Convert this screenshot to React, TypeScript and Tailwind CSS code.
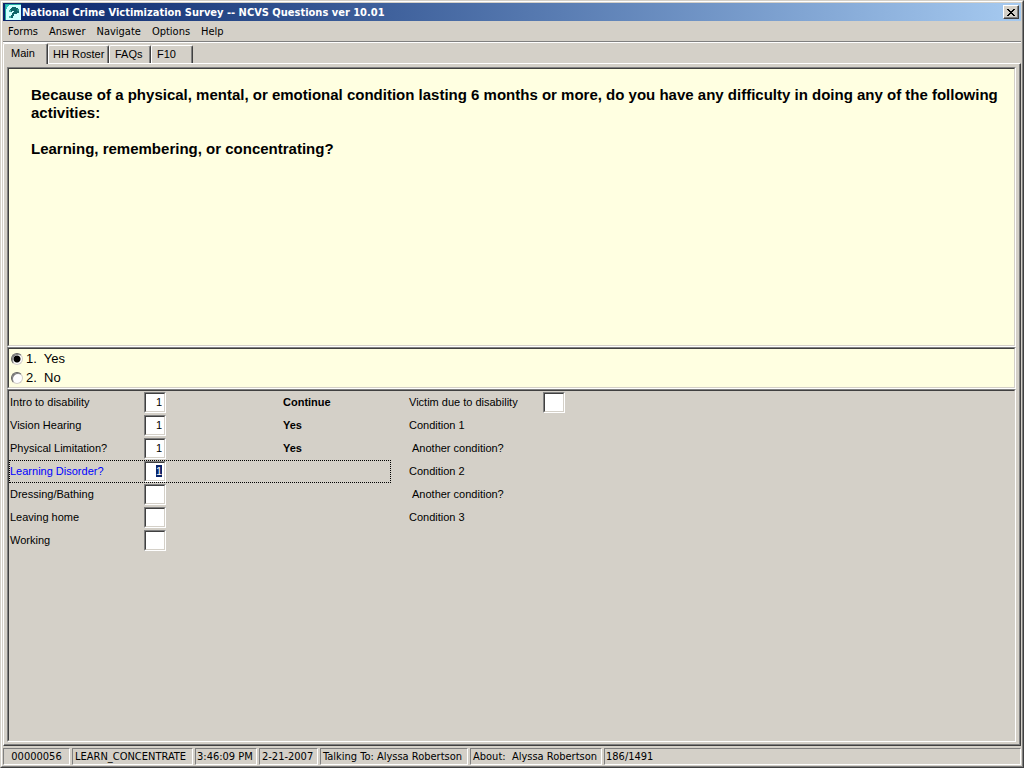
import { useEffect, useRef, useState } from "react";
import clsx from "clsx";

const MENU = ["Forms", "Answer", "Navigate", "Options", "Help"];

const TABS = [
  { name: "Main", width: "w-[45px]" },
  { name: "HH Roster", width: "w-[61px] pl-1" },
  { name: "FAQs", width: "w-[42px] pl-[5px]" },
  { name: "F10", width: "w-[42px] pl-[5px]" },
];

const CHOICES = [
  { value: "1", label: "Yes" },
  { value: "2", label: "No" },
];

type Field = {
  label: string;
  value?: string;
  answer?: string;
  noInput?: boolean;
  indent?: boolean;
};

const LEFT_FIELDS: Field[] = [
  { label: "Intro to disability", value: "1", answer: "Continue" },
  { label: "Vision Hearing", value: "1", answer: "Yes" },
  { label: "Physical Limitation?", value: "1", answer: "Yes" },
  { label: "Learning Disorder?", value: "1" },
  { label: "Dressing/Bathing" },
  { label: "Leaving home" },
  { label: "Working" },
];

const RIGHT_FIELDS: Field[] = [
  { label: "Victim due to disability" },
  { label: "Condition 1", noInput: true },
  { label: "Another condition?", noInput: true, indent: true },
  { label: "Condition 2", noInput: true },
  { label: "Another condition?", noInput: true, indent: true },
  { label: "Condition 3", noInput: true },
];

const STATUS = [
  { text: "00000056", width: "w-[67px] justify-center" },
  { text: "LEARN_CONCENTRATE", width: "w-[121px] pl-0.5" },
  { text: "3:46:09 PM", width: "w-[62px] pl-px" },
  { text: "2-21-2007", width: "w-[59px] pl-0.5" },
  { text: "Talking To: Alyssa Robertson", width: "w-[148px] pl-0.5" },
  { text: "About:  Alyssa Robertson", width: "w-[132px] pl-0.5" },
  { text: "186/1491", width: "flex-1 pl-px" },
];

// two-tone sunken edge: outer border plus an inner one
const OUTER = "border border-t-[#808080] border-l-[#808080] border-b-white border-r-white";
const INNER = "border border-t-[#404040] border-l-[#404040] border-b-[#d4d0c8] border-r-[#d4d0c8]";

function Sunken({
  children,
  className,
  innerClassName,
}: {
  children: React.ReactNode;
  className?: string;
  innerClassName?: string;
}) {
  return (
    <div className={clsx("flex flex-col", OUTER, className)}>
      <div className={clsx("flex-1", INNER, innerClassName)}>{children}</div>
    </div>
  );
}

function TitleBar() {
  return (
    <header className="flex h-[18px] items-center bg-linear-to-r from-[#0a246a] to-[#a6caf0] pl-0.5 pr-0.5">
      <svg viewBox="0 0 16 16" className="h-4 w-4 shrink-0" shapeRendering="crispEdges">
        <rect width="16" height="16" fill="#d0ffff" />
        <path d="M0 0H16V1H1V16H0Z" fill="#20a8a0" />
        <path d="M1 1H4V2H3V3H2V5H1Z" fill="#30c8c0" />
        <path d="M7 3H11V4H13V5H14V9H12V10H10V8H9V7H7V8H4V6H5V5H6V4H7Z" fill="#0c6468" />
        <path d="M4 6H6V8H4Z" fill="#48b0a8" />
        <path d="M8 8H10V10H9V12H8V14H5V12H6V11H7V9H8Z" fill="#0c6468" />
        <path d="M4 12H6V14H4Z" fill="#48b0a8" />
        <path d="M12 5H14V7H12Z" fill="#2c8c88" />
      </svg>
      <h1 className="flex-1 whitespace-nowrap pl-px pt-px text-[11px] font-bold leading-[18px] text-white">
        National Crime Victimization Survey -- NCVS Questions ver 10.01
      </h1>
      <button
        aria-label="Close"
        className="flex h-[14px] w-4 items-center justify-center border border-t-white border-l-white border-b-[#404040] border-r-[#404040] bg-[#d4d0c8] shadow-[inset_-1px_-1px_0_#808080]"
      >
        <svg viewBox="0 0 8 7" className="h-[7px] w-2" shapeRendering="crispEdges">
          <path
            d="M0 0H2V1H3V2H5V1H6V0H8V1H7V2H6V3H5V4H6V5H7V6H8V7H6V6H5V5H3V6H2V7H0V6H1V5H2V4H3V3H2V2H1V1H0Z"
            fill="#000"
          />
        </svg>
      </button>
    </header>
  );
}

function FieldRow({
  id,
  field,
  active,
}: {
  id: string;
  field: Field;
  active?: boolean;
}) {
  const ref = useRef<HTMLInputElement>(null);
  const [value, setValue] = useState(field.value ?? "");

  useEffect(() => {
    if (active) {
      ref.current?.focus();
      ref.current?.select();
    }
  }, [active]);

  return (
    <div
      className={clsx(
        "flex h-[23px] items-center border border-dotted",
        active ? "border-black text-[#0000ff]" : "border-transparent"
      )}
    >
      {field.noInput ? (
        <span className={clsx("w-[134px]", field.indent && "pl-[3px]")}>{field.label}</span>
      ) : (
        <>
          <label htmlFor={id} className="w-[134px]">
            {field.label}
          </label>
          <div className={clsx("h-[21px] w-[22px]", OUTER)}>
            <input
              ref={ref}
              id={id}
              type="text"
              maxLength={1}
              value={value}
              onChange={(e) => setValue(e.target.value)}
              className={clsx(
                "block h-[19px] w-5 bg-white pb-0.5 pr-0.5 text-right text-black outline-none selection:bg-[#0a246a] selection:text-white",
                INNER
              )}
            />
          </div>
        </>
      )}
      {field.answer && <b className="ml-[117px]">{field.answer}</b>}
    </div>
  );
}

export default function App() {
  const [tab, setTab] = useState("Main");
  const [choice, setChoice] = useState("1");

  return (
    <div className="flex h-screen flex-col border border-t-[#d4d0c8] border-l-[#d4d0c8] border-b-[#404040] border-r-[#404040] bg-[#d4d0c8] font-['DejaVu_Sans_Condensed','DejaVu_Sans',sans-serif] text-[11px] text-black">
      <div className="flex min-h-0 flex-1 flex-col border border-t-white border-l-white border-b-[#808080] border-r-[#808080] p-px pb-0">
        <TitleBar />

        <nav className="flex h-[21px] items-center gap-[11px] border-b border-[#808080] pl-[5px] pt-px">
          {MENU.map((item) => (
            <button key={item} className="leading-4">
              {item}
            </button>
          ))}
        </nav>

        <main className="flex min-h-0 flex-1 flex-col border-t border-white font-['Liberation_Sans',Arial,sans-serif]">
          <div role="tablist" className="flex h-5 items-end">
            {TABS.map((t) => (
              <button
                key={t.name}
                role="tab"
                aria-selected={tab === t.name}
                onClick={() => setTab(t.name)}
                className={clsx(
                  "rounded-t-xs border-t border-l border-white border-r border-r-[#404040] text-left shadow-[inset_-1px_0_0_#808080]",
                  t.width,
                  t.name === "Main" && "pl-[7px]",
                  tab === t.name ? "z-10 -mb-px h-[21px] bg-[#d4d0c8] pb-0.5" : "h-[18px]"
                )}
              >
                {t.name}
              </button>
            ))}
          </div>

          <div className="flex min-h-0 flex-1 flex-col border border-t-white border-l-white border-b-[#404040] border-r-[#404040]">
            <div className="flex min-h-0 flex-1 flex-col border-b border-r border-[#808080] px-[3px] pt-[3px] pb-0.5">
              <Sunken className="h-[280px]" innerClassName="bg-[#ffffe1] pt-[17px] pl-[22px] pr-4">
                <div className="text-[15px] font-bold leading-[18px]">
                  <p>
                    Because of a physical, mental, or emotional condition lasting 6 months or more,
                    do you have any difficulty in doing any of the following activities:
                  </p>
                  <p className="mt-[18px]">Learning, remembering, or concentrating?</p>
                </div>
              </Sunken>

              <Sunken innerClassName="bg-[#ffffe1] pl-0.5 text-[13px]">
                {CHOICES.map((c) => (
                  <label key={c.value} className="flex h-[19px] items-center gap-[3px] whitespace-pre">
                    <input
                      type="radio"
                      name="difficulty"
                      value={c.value}
                      checked={choice === c.value}
                      onChange={() => setChoice(c.value)}
                      className="h-3 w-3 appearance-none rounded-full border border-t-[#606060] border-l-[#606060] border-b-[#d4d0c8] border-r-[#d4d0c8] bg-white shadow-[inset_1px_1px_0_#808080] checked:bg-[radial-gradient(circle,#000_3px,#fff_4px)]"
                    />
                    {c.value + ".  " + c.label}
                  </label>
                ))}
              </Sunken>

              <Sunken className="min-h-0 flex-1" innerClassName="min-h-0">
                <form className="flex gap-[17px]">
                  <div className="w-[382px]">
                    {LEFT_FIELDS.map((f, i) => (
                      <FieldRow key={i} id={`left-${i}`} field={f} active={i === 3} />
                    ))}
                  </div>
                  <div>
                    {RIGHT_FIELDS.map((f, i) => (
                      <FieldRow key={i} id={`right-${i}`} field={f} />
                    ))}
                  </div>
                </form>
              </Sunken>
            </div>
          </div>
        </main>

        <footer className="flex h-5 gap-0.5 pt-0.5 pb-px">
          {STATUS.map((s) => (
            <div
              key={s.text}
              className={clsx("flex shrink-0 items-center whitespace-pre pt-0.5", OUTER, s.width)}
            >
              {s.text}
            </div>
          ))}
        </footer>
      </div>
    </div>
  );
}
